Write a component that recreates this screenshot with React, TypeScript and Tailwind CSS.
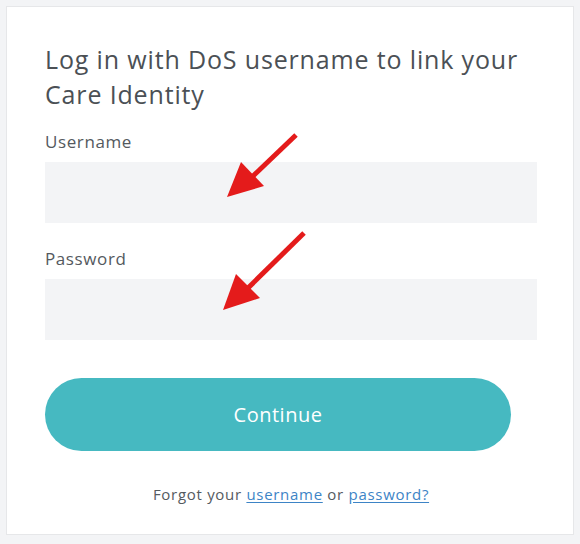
import React from "react";

function Arrow({ x1, y1, x2, y2, tip, a, b }: { x1: number; y1: number; x2: number; y2: number; tip: [number, number]; a: [number, number]; b: [number, number] }) {
  return (
    <g>
      <line x1={x1} y1={y1} x2={x2} y2={y2} stroke="#e41b1b" strokeWidth={5} />
      <polygon points={`${tip[0]},${tip[1]} ${a[0]},${a[1]} ${b[0]},${b[1]}`} fill="#e41b1b" />
    </g>
  );
}

function Field({ label }: { label: string }) {
  return (
    <div className="flex flex-col">
      <label className="text-[17px] leading-[22px] tracking-[0.6px] text-[#54595e]">{label}</label>
      <div className="mt-[9px] h-[61px] bg-[#f3f4f6]" />
    </div>
  );
}

export default function App() {
  return (
    <div
      className="relative w-[580px] h-[544px] bg-[#f3f4f6] pt-[6px] pl-[6px]"
      style={{ fontFamily: "'Open Sans', Lato, sans-serif" }}
    >
      <div className="w-[568px] h-[529px] bg-white border border-[#e6e7e9] pl-[38px] pr-[36px] pt-[35px]">
        <h1 className="max-w-[485px] text-[25px] leading-[35px] tracking-[0.85px] text-[#4b5055] font-normal">
          Log in with DoS username to link your Care Identity
        </h1>
        <div className="mt-[19px] flex flex-col gap-[25px]">
          <Field label="Username" />
          <Field label="Password" />
        </div>
        <button className="mt-[38px] w-[466px] h-[73px] rounded-full bg-[#46b9c1] text-white text-[20px] tracking-[0.5px]">
          Continue
        </button>
        <p className="mt-[32px] w-full text-center text-[15px] tracking-[0.7px] text-[#555a5f]">
          Forgot your{" "}
          <a href="#" className="text-[#3d84c6] underline underline-offset-2">username</a> or{" "}
          <a href="#" className="text-[#3d84c6] underline underline-offset-2">password?</a>
        </p>
      </div>
      <svg className="absolute inset-0 pointer-events-none" width={580} height={544}>
        <Arrow x1={296} y1={135} x2={252} y2={177} tip={[227, 197]} a={[241, 162]} b={[264, 186]} />
        <Arrow x1={304} y1={233} x2={248} y2={288} tip={[223, 310]} a={[236, 274]} b={[260, 298]} />
      </svg>
    </div>
  );
}
